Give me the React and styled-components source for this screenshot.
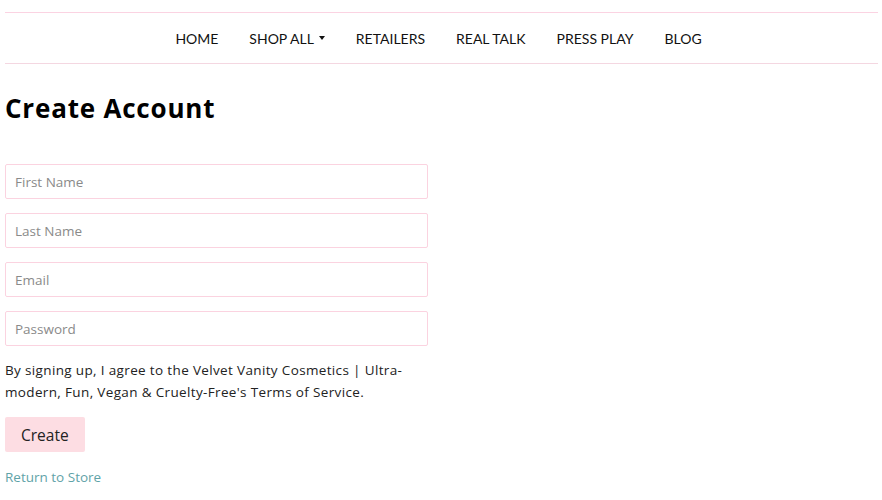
import React from 'react'
import styled, { createGlobalStyle } from 'styled-components'

const GlobalStyle = createGlobalStyle`
    body {
        margin: 0;
        background: #fff;
        font-family: "Open Sans", "Liberation Sans", sans-serif;
        color: #111;
    }
`

const navItems = ['HOME', 'SHOP ALL', 'RETAILERS', 'REAL TALK', 'PRESS PLAY', 'BLOG']
const fields = [
    { label: 'First Name', type: 'text' },
    { label: 'Last Name', type: 'text' },
    { label: 'Email', type: 'email' },
    { label: 'Password', type: 'password' },
]

function App() {
    return (
        <Page>
            <GlobalStyle />
            <Nav>
                {navItems.map((item) => (
                    <NavLink key={item}>
                        {item}
                        {item === 'SHOP ALL' && <Caret />}
                    </NavLink>
                ))}
            </Nav>
            <Title>Create Account</Title>
            <Form>
                {fields.map((f) => (
                    <Input key={f.label} type={f.type} placeholder={f.label} />
                ))}
                <Terms>
                    By signing up, I agree to the Velvet Vanity Cosmetics | Ultra-modern, Fun, Vegan &amp; Cruelty-Free's Terms of Service.
                </Terms>
                <Button type="button">Create</Button>
                <Return href="#">Return to Store</Return>
            </Form>
        </Page>
    )
}

export default App

const Page = styled.div`
    padding: 12px 4px 0 5px;
`

const Nav = styled.nav`
    display: flex;
    justify-content: center;
    align-items: center;
    gap: 31px;
    height: 50px;
    border-top: 1px solid #fbd3e2;
    border-bottom: 1px solid #f4d7e1;
    padding-right: 6px;
`

const NavLink = styled.a`
    display: flex;
    align-items: center;
    gap: 5px;
    font-family: "Lato", "Liberation Sans", sans-serif;
    font-size: 14px;
    color: #111;
    cursor: pointer;
`

const Caret = styled.span`
    width: 0;
    height: 0;
    border-left: 3px solid transparent;
    border-right: 3px solid transparent;
    border-top: 4px solid #111;
`

const Title = styled.h1`
    margin: 26px 0 38px;
    font-size: 26px;
    font-weight: 700;
    color: #000;
    letter-spacing: 0.8px;
`

const Form = styled.form`
    width: 423px;
    display: flex;
    flex-direction: column;
    align-items: flex-start;
`

const Input = styled.input`
    box-sizing: border-box;
    width: 100%;
    height: 35px;
    margin-bottom: 14px;
    padding: 0 9px;
    border: 1px solid #fbd3e0;
    border-radius: 2px;
    font-family: inherit;
    font-size: 13.5px;
    outline: none;

    &::placeholder {
        color: #8a8a8a;
    }
`

const Terms = styled.p`
    margin: -1px 0 14px;
    font-size: 13.5px;
    line-height: 22px;
    color: #222;
    letter-spacing: 0.35px;
`

const Button = styled.button`
    height: 35px;
    padding: 0 16px;
    border: none;
    border-radius: 2px;
    background: #fddde3;
    font-family: inherit;
    font-size: 15.5px;
    color: #222;
    cursor: pointer;
`

const Return = styled.a`
    margin-top: 16px;
    font-size: 13.5px;
    color: #5fa3a8;
    text-decoration: none;
`
